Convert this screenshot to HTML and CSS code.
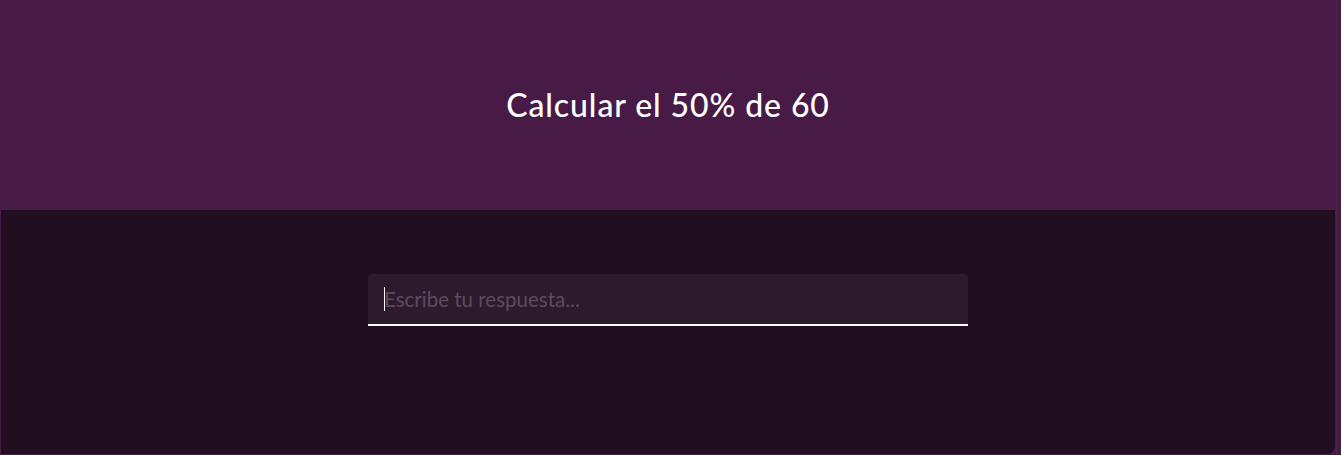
FILE: index.html
```html
<!DOCTYPE html>
<html lang="es">
<head>
<meta charset="utf-8">
<title>Calcular</title>
<link rel="stylesheet" href="styles.css">
</head>
<body>
  <div class="app">
    <header class="header">
      <h1 class="title">Calcular el 50% de 60</h1>
    </header>
    <main class="panel">
      <div class="field">
        <input class="answer" type="text" placeholder="Escribe tu respuesta..." autofocus>
        <span class="caret"></span>
      </div>
    </main>
  </div>
</body>
</html>
```
FILE: styles.css
```css
html, body {
  margin: 0;
  padding: 0;
  height: 100%;
}
body {
  background: #481b47;
  font-family: Lato, "Noto Sans", sans-serif;
  overflow: hidden;
}
.app {
  width: 1336px;
  height: 455px;
  display: flex;
  flex-direction: column;
  border-right: 1px solid #52234f;
}
.header {
  height: 210px;
  display: flex;
  align-items: center;
  justify-content: center;
}
.title {
  margin: 0;
  color: #ffffff;
  font-size: 32px;
  font-weight: 500;
  letter-spacing: 0.9px;
  padding-bottom: 2px;
}
.panel {
  flex: 1;
  margin: 0 0 1px 1px;
  width: 1334px;
  background: #220e21;
  border-radius: 0 0 8px 0;
  display: flex;
  justify-content: center;
  padding-top: 64px;
  box-sizing: border-box;
}
.field {
  position: relative;
  width: 600px;
  height: 52px;
}
.answer {
  width: 100%;
  height: 52px;
  box-sizing: border-box;
  border: none;
  border-bottom: 2px solid #ffffff;
  border-radius: 4px 4px 0 0;
  background: #2e1a2d;
  color: #ffffff;
  padding: 0 16px;
  font-family: inherit;
  font-size: 20.5px;
  outline: none;
  caret-color: transparent;
}
.answer::placeholder {
  color: #5e4a5d;
}
.caret {
  position: absolute;
  left: 16px;
  top: 13px;
  width: 1px;
  height: 24px;
  background: #ffffff;
  pointer-events: none;
}
```
